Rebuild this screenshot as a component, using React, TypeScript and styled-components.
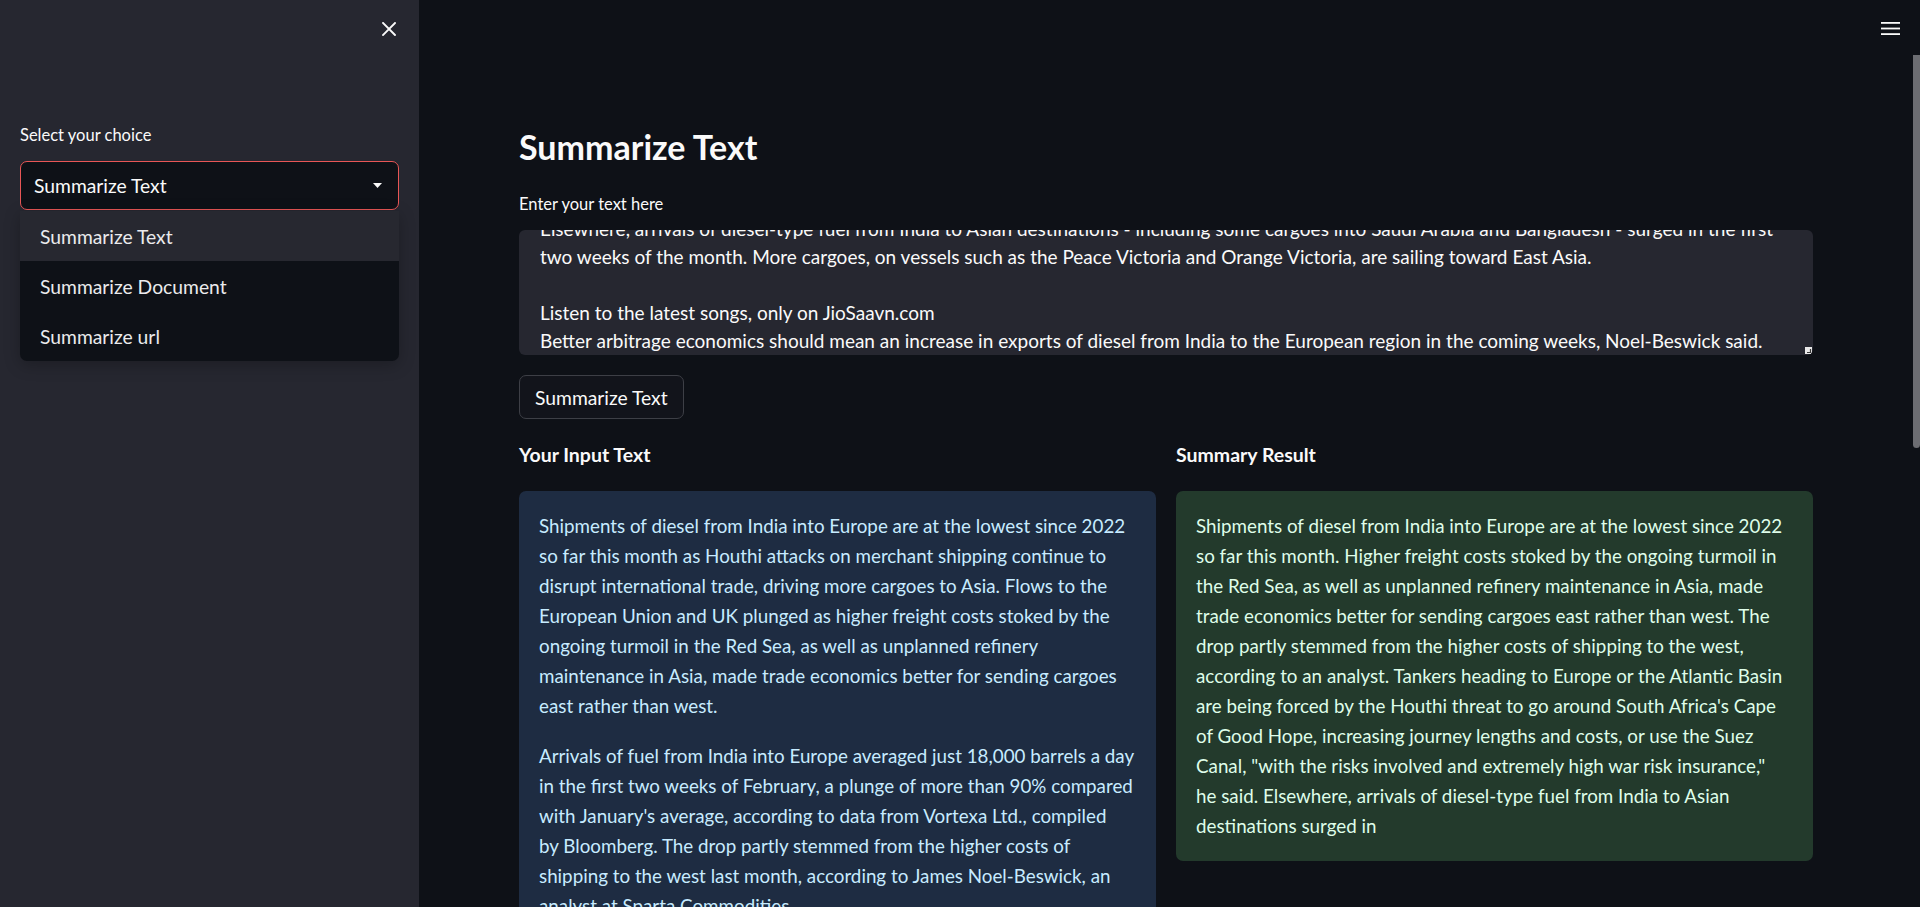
import React from "react";
import styled, { createGlobalStyle } from "styled-components";

const SANS = `"Lato", "Open Sans", "Noto Sans", sans-serif`;

const GlobalStyle = createGlobalStyle`
  *, *::before, *::after { box-sizing: border-box; }
  html, body { margin: 0; padding: 0; height: 100%; overflow: hidden; background: #0e1117; }
  body { font-family: ${SANS}; color: #fafafa; -webkit-font-smoothing: antialiased; }
  #root { height: 100%; }
`;

const Shell = styled.div`
  display: flex;
  height: 100vh;
  width: 100%;
`;

/* ---------- Sidebar ---------- */
const Sidebar = styled.aside`
  flex: 0 0 419px;
  height: 100%;
  background: #262730;
  display: flex;
  flex-direction: column;
  padding: 0 20px;
`;

const SidebarTop = styled.div`
  height: 58px;
  display: flex;
  align-items: center;
  justify-content: flex-end;
  padding-right: 3px;
`;

const IconButton = styled.button`
  background: none;
  border: 0;
  padding: 0;
  display: flex;
  color: #fafafa;
  cursor: pointer;
`;

const Field = styled.div<{ $top?: number }>`
  display: flex;
  flex-direction: column;
  margin-top: ${(p) => p.$top ?? 0}px;
`;

const Label = styled.label`
  display: block;
  font-size: 16.5px;
  line-height: 24px;
  color: #fafafa;
  margin-bottom: 14px;
`;

const SelectWrap = styled.div`
  position: relative;
`;

const SelectBox = styled.div`
  height: 49px;
  border: 1px solid #e85656;
  border-radius: 7px;
  background: #0e1117;
  display: flex;
  align-items: center;
  justify-content: space-between;
  padding: 0 16px 0 13px;
  font-size: 19.3px;
  color: #fafafa;
`;

const Menu = styled.ul`
  position: absolute;
  top: calc(100% + 1px);
  left: 0;
  right: 0;
  margin: 0;
  padding: 0;
  list-style: none;
  background: #0e1117;
  border-radius: 0 0 7px 7px;
  box-shadow: 0 4px 16px rgba(0, 0, 0, 0.25);
  overflow: hidden;
  z-index: 5;
`;

const MenuItem = styled.li<{ $active?: boolean }>`
  height: 50px;
  display: flex;
  align-items: center;
  padding-left: 20px;
  font-size: 19.3px;
  color: #ebebed;
  background: ${(p) => (p.$active ? "#272830" : "transparent")};
`;

/* ---------- Main ---------- */
const MainArea = styled.div`
  flex: 1;
  display: flex;
  height: 100%;
  min-width: 0;
  background: #0e1117;
`;

const Content = styled.main`
  flex: 1;
  display: flex;
  flex-direction: column;
  height: 100%;
  overflow: hidden;
  min-width: 0;
`;

const TopBar = styled.header`
  flex: 0 0 57px;
  display: flex;
  align-items: center;
  justify-content: flex-end;
  padding-right: 13px;
`;

const ScrollRail = styled.div`
  flex: 0 0 7px;
  display: flex;
  flex-direction: column;
  padding-top: 55px;
`;

const ScrollThumb = styled.div`
  height: 393px;
  background: #6c6d72;
  border-radius: 0 0 4px 4px;
`;

const Block = styled.div`
  padding: 69px 100px 200px;
  display: flex;
  flex-direction: column;
`;

const Title = styled.h2`
  margin: 0;
  font-size: 34px;
  line-height: 41px;
  font-weight: 700;
  color: #fafafa;
`;

const TextArea = styled.div`
  position: relative;
  height: 125px;
  overflow: hidden;
  background: #262730;
  border-radius: 6px;
  padding: 0 21px;
  font-size: 19px;
  line-height: 28px;
  color: #fafafa;
`;

const ScrolledText = styled.div`
  margin-top: -15px;
`;

const TextLine = styled.div`
  height: 28px;
  white-space: pre;
`;

const Grip = styled.svg`
  position: absolute;
  right: 1px;
  bottom: 1px;
`;

const Button = styled.button`
  align-self: flex-start;
  margin-top: 20px;
  height: 44px;
  padding: 0 15px;
  border: 1px solid #3d3f46;
  border-radius: 7px;
  background: #12141b;
  color: #fafafa;
  font-family: ${SANS};
  font-size: 19.3px;
  cursor: pointer;
`;

const Columns = styled.div`
  display: grid;
  grid-template-columns: minmax(0, 1fr) minmax(0, 1fr);
  column-gap: 20px;
  margin-top: 24px;
  align-items: start;
`;

const Column = styled.section`
  display: flex;
  flex-direction: column;
  gap: 24px;
  min-width: 0;
`;

const SubHeading = styled.div`
  font-size: 19.5px;
  line-height: 24px;
  font-weight: 700;
  color: #fafafa;
`;

const Alert = styled.div<{ $kind: "info" | "success" }>`
  border-radius: 7px;
  padding: 20px;
  font-size: 18.8px;
  line-height: 30px;
  background: ${(p) => (p.$kind === "info" ? "#1e2c42" : "#233a2c")};
  color: ${(p) => (p.$kind === "info" ? "#c7ebff" : "#dffde9")};
`;

const Para = styled.p`
  margin: 0 0 20px;
  &:last-child { margin-bottom: 0; }
`;

const WrapLine = styled.span`
  display: block;
  white-space: pre;
`;

/* ---------- Data ---------- */
const textAreaLines = [
  "Elsewhere, arrivals of diesel-type fuel from India to Asian destinations - including some cargoes into Saudi Arabia and Bangladesh - surged in the first",
  "two weeks of the month. More cargoes, on vessels such as the Peace Victoria and Orange Victoria, are sailing toward East Asia.",
  "",
  "Listen to the latest songs, only on JioSaavn.com",
  "Better arbitrage economics should mean an increase in exports of diesel from India to the European region in the coming weeks, Noel-Beswick said.",
];

const inputParas: string[][] = [
  [
    "Shipments of diesel from India into Europe are at the lowest since 2022",
    "so far this month as Houthi attacks on merchant shipping continue to",
    "disrupt international trade, driving more cargoes to Asia. Flows to the",
    "European Union and UK plunged as higher freight costs stoked by the",
    "ongoing turmoil in the Red Sea, as well as unplanned refinery",
    "maintenance in Asia, made trade economics better for sending cargoes",
    "east rather than west.",
  ],
  [
    "Arrivals of fuel from India into Europe averaged just 18,000 barrels a day",
    "in the first two weeks of February, a plunge of more than 90% compared",
    "with January's average, according to data from Vortexa Ltd., compiled",
    "by Bloomberg. The drop partly stemmed from the higher costs of",
    "shipping to the west last month, according to James Noel-Beswick, an",
    "analyst at Sparta Commodities.",
  ],
  [
    "Tankers heading to Europe or the Atlantic Basin are being forced by the",
    "Houthi threat to go around South Africa's Cape of Good Hope, increasing",
    "journey lengths and costs, or use the Suez Canal, \"with the risks",
    "involved and extremely high war risk insurance,\" he said.",
  ],
  [
    "Elsewhere, arrivals of diesel-type fuel from India to Asian destinations",
    "- including some cargoes into Saudi Arabia and Bangladesh - surged in",
    "the first two weeks of the month. More cargoes, on vessels such as the",
    "Peace Victoria and Orange Victoria, are sailing toward East Asia.",
  ],
  ["Listen to the latest songs, only on JioSaavn.com"],
  [
    "Better arbitrage economics should mean an increase in exports of",
    "diesel from India to the European region in the coming weeks,",
    "Noel-Beswick said.",
  ],
];

const summaryLines = [
  "Shipments of diesel from India into Europe are at the lowest since 2022",
  "so far this month. Higher freight costs stoked by the ongoing turmoil in",
  "the Red Sea, as well as unplanned refinery maintenance in Asia, made",
  "trade economics better for sending cargoes east rather than west. The",
  "drop partly stemmed from the higher costs of shipping to the west,",
  "according to an analyst. Tankers heading to Europe or the Atlantic Basin",
  "are being forced by the Houthi threat to go around South Africa's Cape",
  "of Good Hope, increasing journey lengths and costs, or use the Suez",
  "Canal, \"with the risks involved and extremely high war risk insurance,\"",
  "he said. Elsewhere, arrivals of diesel-type fuel from India to Asian",
  "destinations surged in",
];

const options = ["Summarize Text", "Summarize Document", "Summarize url"];

/* ---------- Icons ---------- */
const CloseIcon = () => (
  <svg width="14" height="14" viewBox="0 0 14 14" fill="none">
    <path d="M1 1 13 13M13 1 1 13" stroke="#fafafa" strokeWidth="1.9" strokeLinecap="square" />
  </svg>
);

const CaretIcon = () => (
  <svg width="9" height="5" viewBox="0 0 9 5">
    <path d="M0 0h9L4.5 5z" fill="#fafafa" />
  </svg>
);

const MenuIcon = () => (
  <svg width="19" height="13" viewBox="0 0 19 13">
    <rect x="0" y="0" width="19" height="1.8" fill="#fafafa" />
    <rect x="0" y="5.6" width="19" height="1.8" fill="#fafafa" />
    <rect x="0" y="11.2" width="19" height="1.8" fill="#fafafa" />
  </svg>
);

export default function App() {
  return (
    <>
      <GlobalStyle />
      <Shell>
        <Sidebar>
          <SidebarTop>
            <IconButton aria-label="Close sidebar">
              <CloseIcon />
            </IconButton>
          </SidebarTop>
          <Field $top={65}>
            <Label>Select your choice</Label>
            <SelectWrap>
              <SelectBox>
                <span>Summarize Text</span>
                <CaretIcon />
              </SelectBox>
              <Menu>
                {options.map((o, i) => (
                  <MenuItem key={o} $active={i === 0}>
                    {o}
                  </MenuItem>
                ))}
              </Menu>
            </SelectWrap>
          </Field>
        </Sidebar>

        <MainArea>
          <Content>
            <TopBar>
              <IconButton aria-label="Main menu">
                <MenuIcon />
              </IconButton>
            </TopBar>
            <Block>
              <Title>Summarize Text</Title>
              <Field $top={25}>
                <Label>Enter your text here</Label>
                <TextArea>
                  <ScrolledText>
                    {textAreaLines.map((l, i) => (
                      <TextLine key={i}>{l}</TextLine>
                    ))}
                  </ScrolledText>
                  <Grip width="7" height="7" viewBox="0 0 7 7">
                    <rect width="7" height="7" fill="#e9e9e9" />
                    <path d="M2 5.5h3.5V2" stroke="#3a3a3a" strokeWidth="1.2" fill="none" />
                  </Grip>
                </TextArea>
              </Field>
              <Button>Summarize Text</Button>
              <Columns>
                <Column>
                  <SubHeading>Your Input Text</SubHeading>
                  <Alert $kind="info">
                    {inputParas.map((p, i) => (
                      <Para key={i}>
                        {p.map((l, j) => (
                          <WrapLine key={j}>{l}</WrapLine>
                        ))}
                      </Para>
                    ))}
                  </Alert>
                </Column>
                <Column>
                  <SubHeading>Summary Result</SubHeading>
                  <Alert $kind="success">
                    <Para>
                      {summaryLines.map((l, j) => (
                        <WrapLine key={j}>{l}</WrapLine>
                      ))}
                    </Para>
                  </Alert>
                </Column>
              </Columns>
            </Block>
          </Content>
          <ScrollRail>
            <ScrollThumb />
          </ScrollRail>
        </MainArea>
      </Shell>
    </>
  );
}
